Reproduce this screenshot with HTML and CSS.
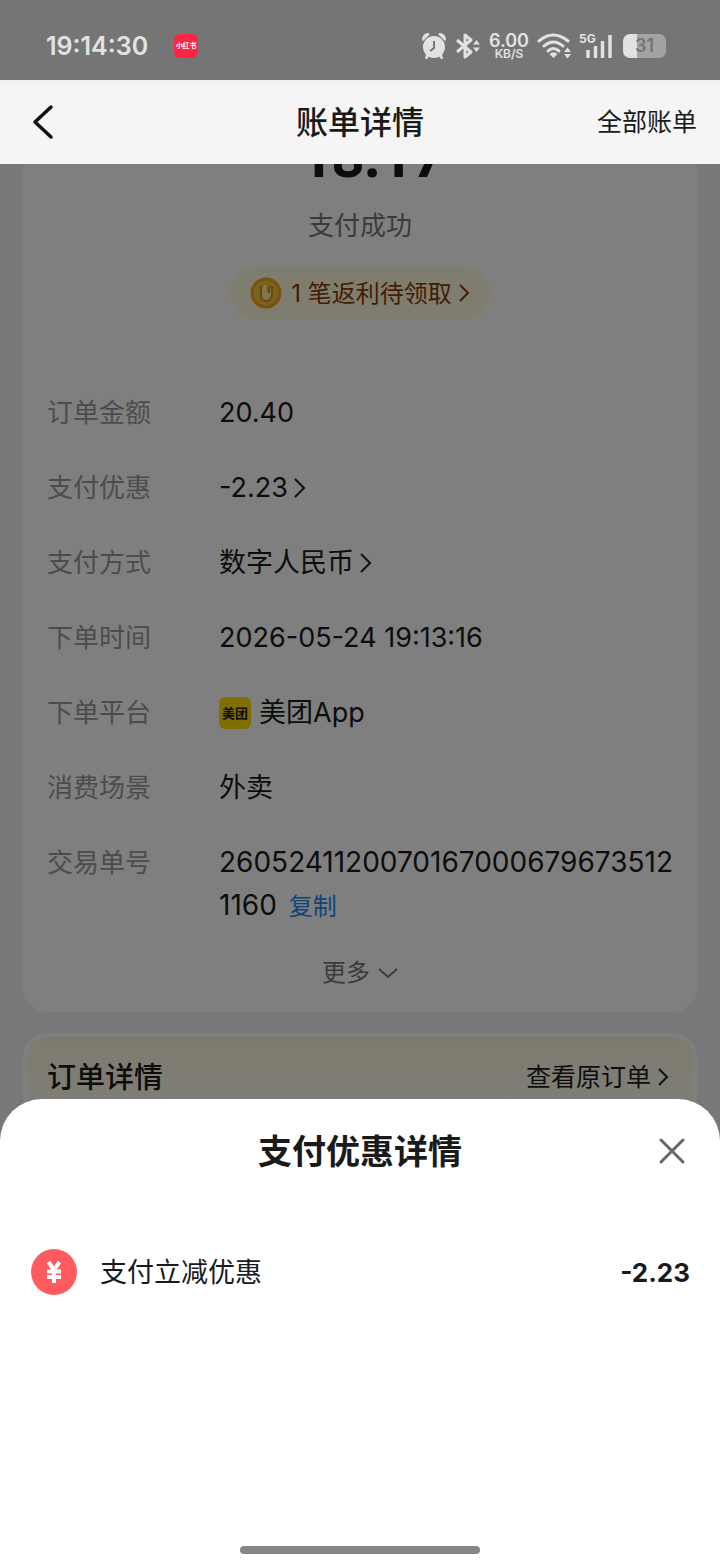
FILE: index.html
```html
<!DOCTYPE html>
<html lang="zh-CN">

<head>
  <meta charset="UTF-8">
  <meta name="viewport" content="width=device-width, initial-scale=1.0">
  <title>账单详情</title>
  <link rel="stylesheet" href="styles.css">
</head>

<body>
  <div class="status-bar">
    <span class="clock">19:14:30</span>
    <span class="app-badge">小红书</span>
    <div class="status-icons">
      <svg width="26" height="28" viewBox="0 0 26 28">
        <circle cx="13" cy="15" r="11" fill="#e2e2e2"/>
        <path d="M1 8Q1 2 7 1L9 2L2 9zM25 8Q25 2 19 1L17 2L24 9zM5 22l3 2-2 3H4zM21 22l-3 2 2 3h2z" fill="#e2e2e2"/>
        <path d="M13 9v7l-4 3" fill="none" stroke="#757575" stroke-width="2"/>
      </svg>
      <svg width="26" height="28" viewBox="0 0 26 28">
        <path d="M2 8l14 12-6 5V3l6 5L2 20" fill="none" stroke="#e2e2e2" stroke-width="3" stroke-linejoin="round"/>
        <path d="M18 12.500l3.500-4.500 3.500 4.500zM18 15.500l3.500 4.500 3.500-4.500z" fill="#e2e2e2"/>
      </svg>
      <div class="net-speed">
        <b>6.00</b>
        <small>KB/S</small>
      </div>
      <svg width="34" height="28" viewBox="0 0 34 28">
        <g fill="none" stroke="#e2e2e2" stroke-width="3" stroke-linecap="round">
          <path d="M2 9Q16 -3 31 9"/>
          <path d="M7 14Q16 6 26 14"/>
          <path d="M11 19Q16 14 22 19"/>
        </g>
        <path d="M12.500 22Q16.500 18.500 20.500 22L16.500 26z" fill="#e2e2e2"/>
        <path d="M27 20l3.500-4.500 3.500 4.500zM27 22l3.500 4.500 3.500-4.500z" fill="#e2e2e2"/>
      </svg>
      <div class="signal">
        <span>5G</span>
        <svg width="28" height="26" viewBox="0 0 28 26">
          <path d="M3 17v8M10.500 13v12M17.500 8v17M25 2v23" stroke="#e2e2e2" stroke-width="3.500"/>
        </svg>
      </div>
      <div class="battery"><span>31</span></div>
    </div>
  </div>

  <header class="nav-bar">
    <button class="back" aria-label="返回">
      <svg width="24" height="36" viewBox="0 0 24 36">
        <path d="M19 3L3 18l16 15" fill="none" stroke="#111" stroke-width="3.500" stroke-linecap="round" stroke-linejoin="round"/>
      </svg>
    </button>
    <h1>账单详情</h1>
    <a class="all-bills" href="#">全部账单</a>
  </header>

  <main class="page">
    <section class="card bill">
      <div class="amount">18.17</div>
      <p class="pay-state">支付成功</p>
      <a class="rebate" href="#">
        <svg width="32" height="32" viewBox="0 0 32 32">
          <circle cx="16" cy="16" r="14" fill="#f5c33c" stroke="#eda71f" stroke-width="3"/>
          <path d="M11 9v9q0 6 5 6t6-6v-8q-3-2-3 3v3" fill="#ffee9a" stroke="#d98f16" stroke-width="2"/>
          <path d="M15 8v6" stroke="#ffee9a" stroke-width="3"/>
        </svg>
        <span>1 笔返利待领取</span>
        <svg width="12" height="20" viewBox="0 0 12 20">
          <path d="M2 2l8 8-8 8" fill="none" stroke="#8a3a00" stroke-width="2"/>
        </svg>
      </a>

      <dl class="rows">
        <dt>订单金额</dt>
        <dd>20.40</dd>

        <dt>支付优惠</dt>
        <dd>-2.23<svg class="arrow" width="12" height="20" viewBox="0 0 12 20"><path d="M1 1l9 9-9 9"/></svg></dd>

        <dt>支付方式</dt>
        <dd>数字人民币<svg class="arrow" width="12" height="20" viewBox="0 0 12 20"><path d="M1 1l9 9-9 9"/></svg></dd>

        <dt>下单时间</dt>
        <dd>2026-05-24 19:13:16</dd>

        <dt>下单平台</dt>
        <dd><span class="meituan">美团</span>美团App</dd>

        <dt>消费场景</dt>
        <dd>外卖</dd>

        <dt>交易单号</dt>
        <dd class="order-no">2605241120070167000679673512<wbr>1160<button class="copy">复制</button></dd>
      </dl>

      <button class="more">更多
        <svg width="20" height="12" viewBox="0 0 20 12">
          <path d="M1 2l9 8 9-8" fill="none" stroke="#777" stroke-width="2"/>
        </svg>
      </button>
    </section>

    <section class="card order">
      <div class="order-head">
        <h2>订单详情</h2>
        <a href="#"><span>查看原订单</span><svg class="arrow" width="12" height="20" viewBox="0 0 12 20"><path d="M2 2l8 8-8 8"/></svg></a>
      </div>
    </section>
  </main>

  <div class="mask"></div>

  <section class="sheet" role="dialog" aria-labelledby="sheetTitle">
    <div class="sheet-head">
      <h2 id="sheetTitle">支付优惠详情</h2>
      <button class="close" aria-label="关闭">
        <svg width="28" height="28" viewBox="0 0 28 28">
          <path d="M3 3l22 22M25 3L3 25" stroke="#666" stroke-width="3" stroke-linecap="round"/>
        </svg>
      </button>
    </div>
    <div class="discount">
      <svg width="48" height="48" viewBox="0 0 48 48">
        <circle cx="24" cy="24" r="23" fill="#ff5b5e"/>
        <path d="M18.500 14l5.500 8 5.500-8M24 22v13M17 23.500h14M17 29h14" fill="none" stroke="#fff" stroke-width="4"/>
      </svg>
      <span class="discount-name">支付立减优惠</span>
      <b>-2.23</b>
    </div>
    <div class="home-bar"></div>
  </section>
</body>

</html>
```

FILE: styles.css
```css
* {
  box-sizing: border-box;
}

body {
  margin: 0;
  height: 100vh;
  overflow: hidden;
  background: #f0f0f0;
  color: #1a1a1a;
  font-family: Inter, "Noto Sans CJK SC", sans-serif;
  font-size: 27px;
}

h1, h2, p, dl, dd {
  margin: 0;
}

a {
  color: inherit;
  text-decoration: none;
}

button {
  padding: 0;
  border: 0;
  background: none;
  color: inherit;
  font: inherit;
  cursor: pointer;
}

svg {
  flex-shrink: 0;
}

/* chinese glyphs sit low in the line, lift them to the middle */
.nav-bar h1,
.all-bills,
.rebate span,
.order-head h2,
.order-head span,
.sheet-head h2,
.discount-name {
  padding-bottom: 4px;
}

/* system status bar */
.status-bar {
  position: relative;
  z-index: 3;
  display: flex;
  align-items: center;
  height: 80px;
  padding: 12px 54px 0 46px;
  background: #757575;
  color: #e2e2e2;
}

.clock {
  font-size: 25px;
  font-weight: 600;
}

.app-badge {
  width: 24px;
  margin-left: 26px;
  border-radius: 6px;
  background: #ff2442;
  color: #fff;
  font-size: 7px;
  font-weight: bold;
  line-height: 24px;
  text-align: center;
}

.status-icons {
  display: flex;
  align-items: center;
  gap: 8px;
  margin-left: auto;
}

.net-speed {
  display: flex;
  flex-direction: column;
  align-items: center;
  width: 40px;
}

.net-speed b {
  font-size: 18px;
  font-weight: 600;
  line-height: 15px;
}

.net-speed small {
  font-size: 12px;
  font-weight: 600;
  line-height: 12px;
}

.signal {
  display: flex;
  align-items: flex-start;
  width: 34px;
}

.signal span {
  width: 6px;
  font-size: 12px;
  font-weight: bold;
  line-height: 12px;
}

.battery {
  width: 43px;
  margin-left: 2px;
  border-radius: 7px;
  background: linear-gradient(to right, #e2e2e2 33%, #a3a3a3 33%);
  color: #757575;
  font-size: 18px;
  font-weight: 600;
  line-height: 24px;
  text-align: center;
}

/* nav bar */
.nav-bar {
  position: relative;
  z-index: 3;
  display: grid;
  grid-template-columns: 1fr auto 1fr;
  align-items: center;
  height: 84px;
  padding: 0 23px;
  background: linear-gradient(#eee, #f5f5f5 6px);
}

.back {
  display: flex;
  justify-self: start;
  margin-left: 9px;
}

.nav-bar h1 {
  font-size: 32px;
  font-weight: 500;
}

.all-bills {
  justify-self: end;
  font-size: 25px;
}

/* page content, scrolled under the nav bar */
.page {
  margin-top: -67px;
  padding: 0 23px;
}

.card {
  border-radius: 24px;
  background: #fff;
}

.bill {
  display: flex;
  flex-direction: column;
  align-items: center;
  padding: 26px 24px 18px;
}

.amount {
  padding-left: 24px;
  font-family: "Noto Sans", sans-serif;
  font-size: 56px;
  font-weight: 700;
  line-height: 64px;
}

.pay-state {
  margin-top: 17px;
  color: #777;
  font-size: 26px;
  line-height: 43px;
}

.rebate {
  display: flex;
  align-items: center;
  gap: 6px;
  height: 54px;
  margin-top: 19px;
  padding: 0 20px;
  border-radius: 27px;
  background: #fffae0;
  color: #8a3a00;
  font-size: 24px;
}

.rebate span {
  margin-left: 3px;
}

.rows {
  display: grid;
  grid-template-columns: 172px 1fr;
  row-gap: 32px;
  width: 100%;
  margin-top: 71px;
  line-height: 43px;
}

.rows dt {
  color: #999;
  font-size: 26px;
}

.rows dd {
  display: flex;
  align-items: center;
}

.rows .order-no {
  display: block;
  font-size: 28px;
}

.arrow {
  margin-left: 6px;
  fill: none;
  stroke: #222;
  stroke-width: 2;
}

.meituan {
  width: 32px;
  margin-right: 8px;
  border-radius: 6px;
  background: #ffdc00;
  font-size: 13px;
  font-weight: bold;
  line-height: 32px;
  text-align: center;
}

.copy {
  margin-left: 12px;
  color: #1e88f5;
  font-size: 24px;
}

.more {
  display: flex;
  align-items: center;
  gap: 8px;
  margin-top: 23px;
  color: #777;
  font-size: 24px;
  line-height: 43px;
}

.order {
  margin-top: 21px;
  padding: 4px;
}

.order-head {
  display: flex;
  align-items: center;
  justify-content: space-between;
  height: 80px;
  padding: 0 24px 0 20px;
  border-radius: 20px 20px 0 0;
  background: linear-gradient(#fbf7dd, #fffdf0);
}

.order-head h2 {
  font-size: 29px;
  font-weight: 500;
}

.order-head a {
  display: flex;
  align-items: center;
  font-size: 25px;
}

.mask {
  position: fixed;
  inset: 0;
  z-index: 2;
  background: rgba(0, 0, 0, 0.5);
}

/* bottom sheet */
.sheet {
  position: fixed;
  right: 0;
  bottom: 0;
  left: 0;
  z-index: 4;
  display: flex;
  flex-direction: column;
  min-height: 469px;
  padding: 0 30px 14px;
  border-radius: 42px 42px 0 0;
  background: #fff;
}

.sheet-head {
  display: grid;
  grid-template-columns: 1fr auto 1fr;
  align-items: center;
  height: 104px;
}

.sheet-head h2 {
  grid-column: 2;
  font-size: 34px;
  font-weight: 700;
}

.close {
  display: flex;
  justify-self: end;
  margin-right: 4px;
}

.discount {
  display: flex;
  align-items: center;
  margin-top: 45px;
}

.discount-name {
  margin-left: 22px;
}

.discount b {
  margin-left: auto;
  font-size: 26px;
}

.home-bar {
  width: 240px;
  height: 8px;
  margin: auto auto 0;
  border-radius: 4px;
  background: #858585;
}
```
